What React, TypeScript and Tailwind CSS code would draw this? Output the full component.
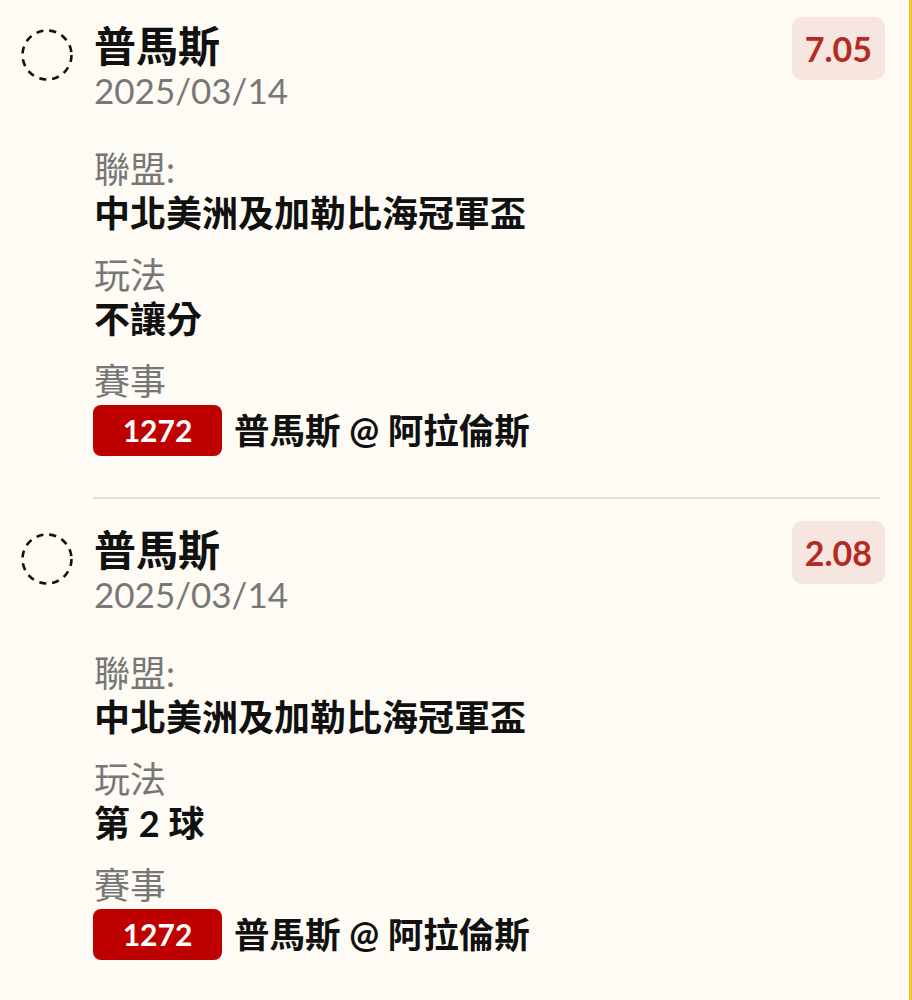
import React from "react";

const FONT = '"Lato", "Noto Sans CJK TC", sans-serif';

type Bet = { odds: string; play: string };

const bets: Bet[] = [
  { odds: "7.05", play: "不讓分" },
  { odds: "2.08", play: "第 2 球" },
];

function Circle() {
  return (
    <svg width="54" height="54" viewBox="0 0 54 54" className="shrink-0">
      <circle
        cx="27"
        cy="27"
        r="24.5"
        fill="none"
        stroke="#111"
        strokeWidth="2.6"
        strokeDasharray="7 6"
      />
    </svg>
  );
}

function Card({ bet }: { bet: Bet }) {
  return (
    <div className="flex items-start">
      <div className="w-[94px] shrink-0 pl-[20px] pt-[6px]">
        <Circle />
      </div>
      <div className="flex-1">
        <div className="flex items-start justify-between">
          <div>
            <div className="text-[42px] leading-[48px] font-bold text-[#111]">普馬斯</div>
            <div className="text-[35px] leading-[40px] text-[#777]">2025/03/14</div>
          </div>
          <div className="mt-[-5px] rounded-[10px] bg-[#f6e6df] px-[13px] h-[63px] flex items-center text-[34px] font-bold text-[#b52a22]">
            {bet.odds}
          </div>
        </div>
        <div className="mt-[38px] text-[36px] leading-[42px] text-[#777]">聯盟:</div>
        <div className="text-[36px] leading-[46px] font-bold text-[#111]">中北美洲及加勒比海冠軍盃</div>
        <div className="mt-[18px] text-[36px] leading-[42px] text-[#777]">玩法</div>
        <div className="text-[36px] leading-[46px] font-bold text-[#111]">{bet.play}</div>
        <div className="mt-[18px] text-[36px] leading-[42px] text-[#777]">賽事</div>
        <div className="mt-[2px] flex items-center">
          <div className="ml-[-1px] flex h-[51px] w-[129px] items-center justify-center rounded-[8px] bg-[#bf0000] text-[30px] font-bold text-white">
            1272
          </div>
          <div className="ml-[12px] text-[35.5px] font-bold text-[#111]">普馬斯 @ 阿拉倫斯</div>
        </div>
      </div>
    </div>
  );
}

export default function App() {
  return (
    <div
      className="min-h-[1000px] w-[912px] bg-[#fdfbf3] border-r-[3px] border-[#f5c42c]"
      style={{ fontFamily: FONT }}
    >
      <div className="pt-[22px] pr-[24px]">
        <Card bet={bets[0]} />
        <div className="ml-[93px] mr-[5px] mt-[40px] mb-[27px] h-[2px] bg-[#e3e0da]" />
        <Card bet={bets[1]} />
      </div>
    </div>
  );
}
